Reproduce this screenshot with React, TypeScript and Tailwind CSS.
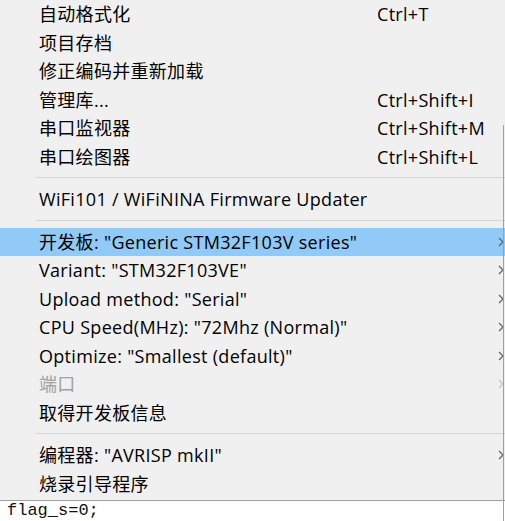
type Item = {
  label: string
  shortcut?: string
  submenu?: boolean
  disabled?: boolean
  active?: boolean
}

type Entry = Item | 'sep'

const ENTRIES: Entry[] = [
  { label: '自动格式化', shortcut: 'Ctrl+T' },
  { label: '项目存档' },
  { label: '修正编码并重新加载' },
  { label: '管理库...', shortcut: 'Ctrl+Shift+I' },
  { label: '串口监视器', shortcut: 'Ctrl+Shift+M' },
  { label: '串口绘图器', shortcut: 'Ctrl+Shift+L' },
  'sep',
  { label: 'WiFi101 / WiFiNINA Firmware Updater' },
  'sep',
  { label: '开发板: "Generic STM32F103V series"', submenu: true, active: true },
  { label: 'Variant: "STM32F103VE"', submenu: true },
  { label: 'Upload method: "Serial"', submenu: true },
  { label: 'CPU Speed(MHz): "72Mhz (Normal)"', submenu: true },
  { label: 'Optimize: "Smallest (default)"', submenu: true },
  { label: '端口', submenu: true, disabled: true },
  { label: '取得开发板信息' },
  'sep',
  { label: '编程器: "AVRISP mkII"', submenu: true },
  { label: '烧录引导程序' },
]

function Chevron({ disabled }: { disabled?: boolean }) {
  return (
    <svg width="6" height="10" viewBox="0 0 6 10" className="shrink-0">
      <path
        d="M1 1 L5 5 L1 9"
        fill="none"
        stroke={disabled ? '#c4c4c4' : '#666666'}
        strokeWidth="1.3"
      />
    </svg>
  )
}

function MenuRow({ item }: { item: Item }) {
  return (
    <div
      className={`flex h-[28.5px] items-center pl-[39px] ${item.active ? 'bg-[#91c9f7]' : ''} ${
        item.disabled ? 'text-[#a0a0a0]' : 'text-[#000]'
      }`}
    >
      <span className="w-[338px] shrink-0 whitespace-nowrap">{item.label}</span>
      <span className="flex-1 whitespace-nowrap">{item.shortcut}</span>
      <span className="flex w-[7px] shrink-0 justify-start">{item.submenu && <Chevron disabled={item.disabled} />}</span>
    </div>
  )
}

export default function App() {
  return (
    <div
      className="relative h-[521px] w-[505px] overflow-hidden bg-white"
      style={{ fontFamily: '"Open Sans", "Noto Sans CJK SC", sans-serif' }}
    >
      <div className="border-b border-[#a0a0a0] bg-[#f0f0f0] pb-[2px] text-[18px] leading-none tracking-[0.3px]">
        {ENTRIES.map((entry, i) =>
          entry === 'sep' ? (
            <div key={i} className="h-[14px] pt-[6px] pl-[35px]">
              <div className="h-px bg-[#d5d5d5]" />
            </div>
          ) : (
            <MenuRow key={i} item={entry} />
          ),
        )}
      </div>
      <div
        className="h-[20px] pl-[7px] text-[17px] leading-[20px] text-[#111]"
        style={{ fontFamily: '"Liberation Mono", monospace' }}
      >
        flag_s=0;
      </div>
      <div className="absolute top-[125px] bottom-0 left-[503px] w-px bg-[#a0a0a0]" />
    </div>
  )
}
